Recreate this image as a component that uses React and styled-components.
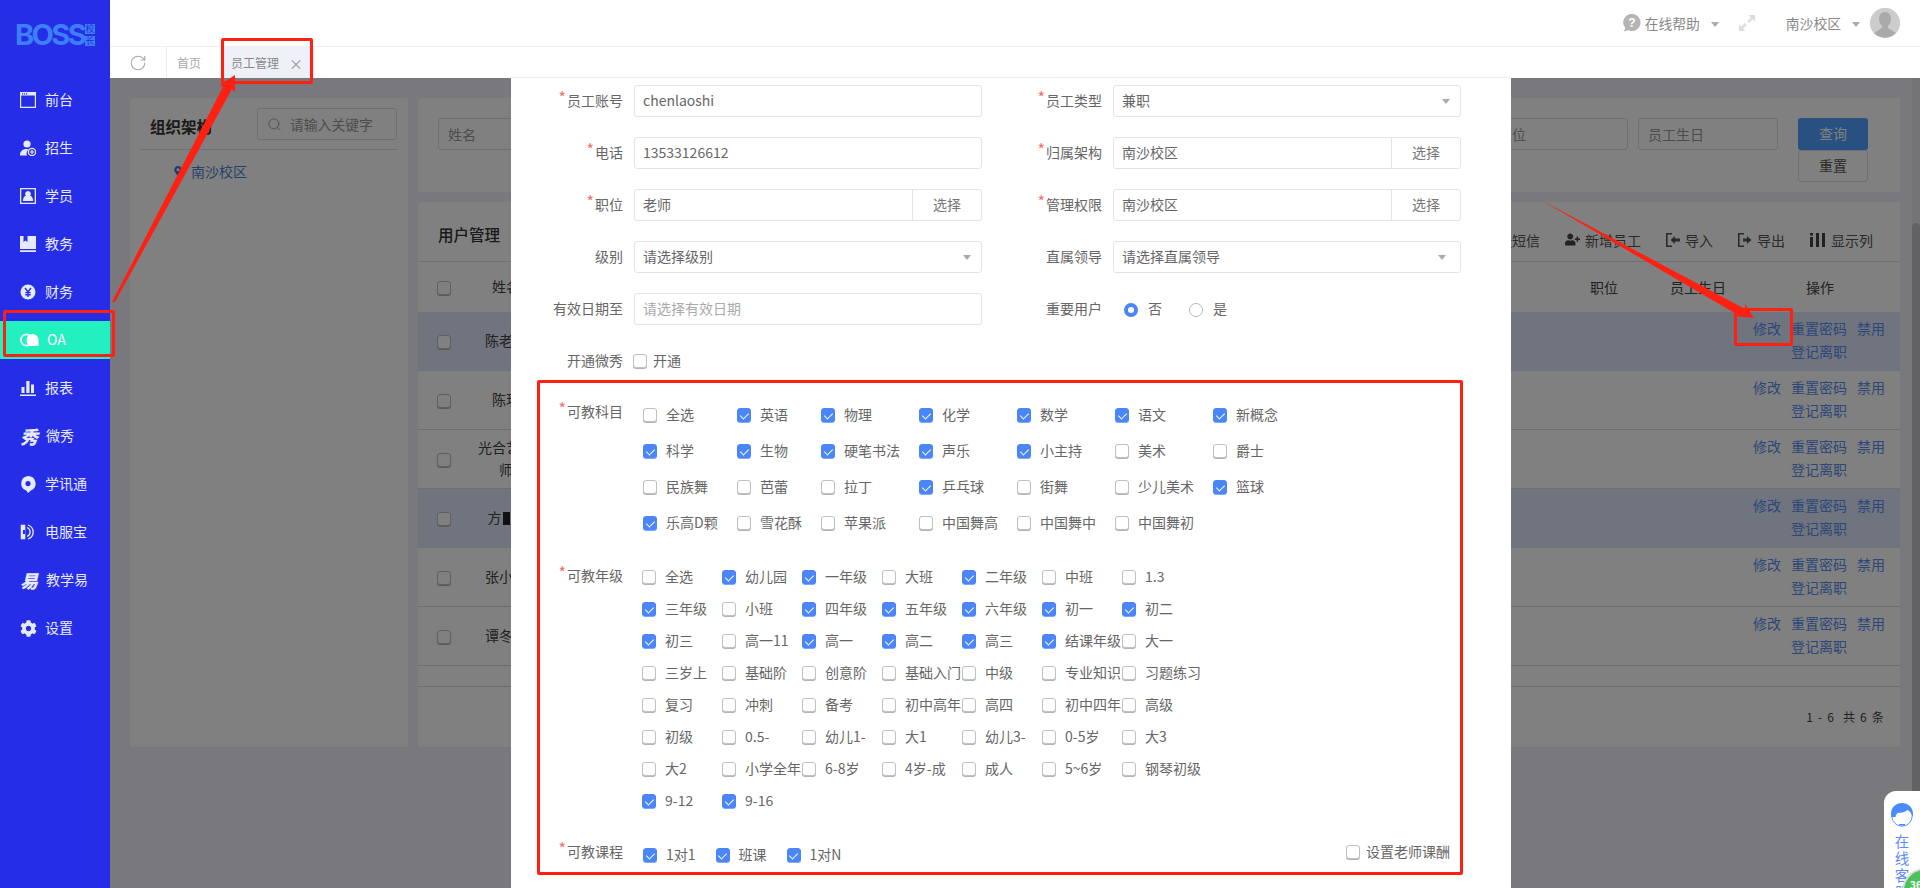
import React from 'react';
import styled, { createGlobalStyle } from 'styled-components';
import { RotateCw, Search } from 'lucide-react';
import { FaCog, FaUserPlus, FaMapMarkerAlt } from 'react-icons/fa';

const FONT = '"Noto Sans CJK SC", "Noto Sans", sans-serif';

const Global = createGlobalStyle`
  html, body { margin: 0; padding: 0; height: 100%; overflow: hidden; }
  body { font-family: ${FONT}; font-size: 14px; color: #666; background: #fff; }
  #root { height: 100%; }
  * { box-sizing: border-box; }
`;

const Page = styled.div`
  position: relative;
  display: flex;
  width: 1920px;
  height: 888px;
  overflow: hidden;
`;

/* ---------- sidebar ---------- */
const Sidebar = styled.aside`
  width: 110px;
  flex: none;
  background: #262de6;
  display: flex;
  flex-direction: column;
`;
const Logo = styled.div`
  height: 81px;
  padding: 24px 0 0 15px;
  display: flex;
  gap: 3px;
  align-items: flex-start;
`;
const LogoWord = styled.span`
  font-family: "Inter", sans-serif;
  font-weight: 700;
  font-size: 29px;
  line-height: 22px;
  letter-spacing: -2.6px;
  color: #3c7ffb;
  width: 67px;
`;
const LogoSeal = styled.span`
  display: flex;
  flex-direction: column;
  gap: 2px;
`;
const SealChar = styled.span`
  width: 10px;
  height: 10px;
  background: #3c7ffb;
  color: #262de6;
  font-size: 9px;
  line-height: 10px;
  text-align: center;
`;
const NavItem = styled.div`
  height: 38px;
  margin-bottom: 10px;
  padding: 0 0 2px 20px;
  display: flex;
  align-items: center;
  gap: 8px;
  background: ${p => (p.$active ? '#23f0c1' : 'transparent')};
  color: ${p => (p.$active ? '#fff' : '#e6eaff')};
  font-size: 14px;
  white-space: nowrap;
`;
const NavIcon = styled.span`
  min-width: 17px;
  height: 17px;
  flex: none;
  margin-top: 2px;
  display: inline-flex;
  align-items: center;
  justify-content: flex-start;
  color: #e6eaff;
`;
const GlyphIcon = styled.span`
  font-size: 18px;
  font-weight: 900;
  font-style: italic;
  line-height: 17px;
  color: #e6eaff;
`;

/* ---------- main column ---------- */
const Main = styled.div`
  flex: 1;
  min-width: 0;
  display: flex;
  flex-direction: column;
`;
const TopBar = styled.header`
  height: 47px;
  flex: none;
  border-bottom: 1px solid #eee;
  background: #fff;
  display: flex;
  align-items: center;
  justify-content: flex-end;
  padding-right: 20px;
  color: #888;
  font-size: 13.8px;
`;
const HelpText = styled.span`
  margin-left: 4px;
`;
const TopCaret = styled.span`
  width: 0;
  height: 0;
  border-left: 4.5px solid transparent;
  border-right: 4.5px solid transparent;
  border-top: 5px solid #aaa;
  margin: 2px 0 0 11px;
`;
const ExpandWrap = styled.span`
  margin: 0 30px 0 19px;
  display: inline-flex;
`;
const Avatar = styled.span`
  width: 30px;
  height: 30px;
  border-radius: 50%;
  overflow: hidden;
  margin-left: 10px;
  background: #ccc;
  display: block;
`;
const TabBar = styled.nav`
  height: 31px;
  flex: none;
  background: #fff;
  display: flex;
  align-items: stretch;
  font-size: 12px;
  color: #aaa;
`;
const RefreshCell = styled.span`
  width: 57px;
  flex: none;
  display: flex;
  align-items: center;
  justify-content: center;
  border-right: 1px solid #eee;
  color: #aaa;
`;
const Tab = styled.span`
  display: flex;
  align-items: center;
  padding: 0 ${p => (p.$active ? '11px' : '22px')} 0 ${p => (p.$active ? '8px' : '10px')};
  gap: 10px;
  color: ${p => (p.$active ? '#888' : '#aaa')};
  background: ${p => (p.$active ? '#eef0f8' : 'transparent')};
`;
const TabClose = styled.span`
  font-size: 14px;
  color: #999;
  line-height: 1;
`;

/* ---------- dimmed page content ---------- */
const Content = styled.section`
  position: relative;
  flex: 1;
  min-height: 0;
  display: flex;
  background: #f2f0fa;
  color: #333;
`;
const Workspace = styled.div`
  flex: 1;
  min-width: 0;
  padding: 20px 12px 0 20px;
  display: grid;
  grid-template-columns: 278px 1fr;
  grid-template-rows: 649px;
  gap: 10px;
`;
const Card = styled.div`
  background: #fff;
  border-radius: 3px;
`;
const TreeCard = styled(Card)`
  padding: 10px 10px 0;
`;
const TreeHead = styled.div`
  display: flex;
  align-items: flex-start;
  justify-content: space-between;
  height: 42px;
  border-bottom: 1px solid #ddd;
  padding-left: 10px;
`;
const TreeTitle = styled.h3`
  margin: 7px 0 0;
  font-size: 15.5px;
  line-height: 22px;
  font-weight: 700;
  color: #333;
`;
const SearchBox = styled.div`
  width: 140px;
  height: 32px;
  border: 1px solid #ddd;
  border-radius: 3px;
  display: flex;
  align-items: center;
  gap: 8px;
  padding-left: 9px;
  margin-right: 1px;
  color: #999;
  font-size: 13.8px;
`;
const TreeNode = styled.div`
  margin: 10px 0 0 33px;
  display: flex;
  align-items: center;
  gap: 8px;
  color: #4f80d8;
  font-size: 14px;
  line-height: 22px;
`;
const RightColumn = styled.div`
  display: flex;
  flex-direction: column;
  gap: 10px;
  min-width: 0;
`;
const FilterCard = styled(Card)`
  height: 94px;
  padding: 20px 32px 0 20px;
  display: flex;
  justify-content: space-between;
  align-items: flex-start;
`;
const FilterGroup = styled.div`
  display: flex;
  gap: 10px;
`;
const FilterInput = styled.div`
  width: 140px;
  height: 32px;
  border: 1px solid #ddd;
  border-radius: 3px;
  padding-left: 9px;
  line-height: 30px;
  color: #999;
`;
const ButtonStack = styled.div`
  margin-left: 10px;
  display: flex;
  flex-direction: column;
  width: 70px;
`;
const PrimaryBtn = styled.div`
  height: 32px;
  line-height: 31px;
  text-align: center;
  background: #50a0ff;
  color: #fff;
  border-radius: 3px;
  font-size: 14px;
`;
const PlainBtn = styled.div`
  height: 32px;
  line-height: 29px;
  text-align: center;
  border: 1px solid #ddd;
  border-radius: 3px;
  color: #555;
`;
const TableCard = styled(Card)`
  height: 545px;
`;
const TableTools = styled.div`
  height: 60px;
  border-bottom: 1px solid #e0e0e0;
  display: flex;
  align-items: center;
  justify-content: space-between;
  padding: 0 27px 0 20px;
  font-size: 14px;
  color: #555;
`;
const TableTitle = styled.h3`
  margin: 5px 0 0;
  font-size: 15.5px;
  font-weight: 500;
  color: #333;
`;
const ToolGroup = styled.div`
  display: flex;
  gap: 25px;
  margin-top: 16px;
`;
const Tool = styled.span`
  display: flex;
  align-items: center;
  gap: 5px;
  color: #555;
`;
const HeadRow = styled.div`
  height: 50px;
  display: flex;
  align-items: center;
  padding: 0 66px 0 19px;
  color: #444;
`;
const NameCell = styled.div`
  width: 110px;
  flex: none;
  margin-top: -2px;
  text-align: center;
  line-height: 22px;
  color: #444;
`;
const Spacer = styled.span`
  flex: 1;
`;
const HeadLabel = styled.span`
  margin-left: ${p => p.$gap}px;
`;
const Row = styled.div`
  height: 59px;
  display: flex;
  align-items: center;
  padding: 0 15px 0 19px;
  background: ${p => (p.$hi ? '#dee8fc' : 'transparent')};
  border-bottom: 1px solid ${p => (p.$hi ? 'transparent' : '#dcdcdc')};
`;
const Ops = styled.div`
  display: grid;
  grid-template-columns: 28px 56px 28px;
  column-gap: 10px;
  margin-top: -3px;
  line-height: 23px;
  color: #5a8ef0;
`;
const OpsSecond = styled.span`
  grid-column: 2;
`;
const EmptyRow = styled.div`
  height: 21px;
  border-bottom: 1px solid #dcdcdc;
`;
const Pager = styled.div`
  display: flex;
  justify-content: flex-end;
  padding: 21px 15px 0 0;
  font-size: 12px;
  letter-spacing: 1.2px;
  color: #444;
`;
const Emoji = styled.span`
  display: inline-block;
  width: 7px;
  height: 13px;
  background: #222;
  vertical-align: -2px;
  margin: 0 1px;
`;
const ScrollTrack = styled.div`
  width: 8px;
  flex: none;
  padding-top: 145px;
  background: #e8e8ee;
`;
const ScrollThumb = styled.div`
  height: 100%;
  background: #c4c4ca;
  border-radius: 4px 4px 0 0;
`;
const Mask = styled.div`
  position: absolute;
  inset: 0;
  background: rgba(0, 0, 0, 0.497);
`;

/* ---------- modal ---------- */
const Modal = styled.div`
  position: absolute;
  left: 401px;
  top: -1px;
  bottom: 0;
  width: 1000px;
  background: #fff;
  border-top: 1px solid #eee;
  padding-top: 7px;
  color: #666;
  font-size: 14px;
  overflow: hidden;
`;
const FormGrid = styled.div`
  display: grid;
  grid-template-columns: 471px 471px;
  column-gap: 8px;
  row-gap: 20px;
`;
const Field = styled.div`
  display: grid;
  grid-template-columns: 112px 348px;
  column-gap: 11px;
  height: 32px;
  align-items: center;
`;
const FieldLabel = styled.label`
  text-align: right;
  line-height: 20px;
  padding-bottom: 2px;
  color: #666;
  white-space: nowrap;
`;
const Star = styled.span`
  color: #f56c6c;
  font-size: 16px;
  line-height: 14px;
  margin-right: 1px;
  position: relative;
  top: -2px;
`;
const Input = styled.div`
  position: relative;
  height: 32px;
  border: 1px solid #e4e4e4;
  border-radius: 3px;
  padding-left: 8px;
  line-height: 28px;
  color: ${p => (p.$placeholder ? '#aaa' : '#666')};
  display: flex;
  justify-content: space-between;
`;
const PickButton = styled.span`
  width: 69px;
  flex: none;
  border-left: 1px solid #e4e4e4;
  text-align: center;
  color: #777;
`;
const Caret = styled.span`
  position: absolute;
  top: 13px;
  right: ${p => p.$offset}px;
  width: 0;
  height: 0;
  border-left: 4.5px solid transparent;
  border-right: 4.5px solid transparent;
  border-top: 5px solid #aaa;
`;
const InlineCheck = styled.div`
  display: flex;
  align-items: center;
  gap: 6px;
  margin-left: -1px;
  padding-bottom: 2px;
`;
const RadioGroup = styled.div`
  display: flex;
  align-items: center;
  padding: 0 0 2px 11px;
`;
const Radio = styled.span`
  width: 14px;
  height: 14px;
  border-radius: 50%;
  border: ${p => (p.$on ? '4.5px solid #4a86f7' : '1px solid #b8b8b8')};
  background: #fff;
  margin-top: 4px;
`;
const RadioText = styled.span`
  margin: 0 27px 0 10px;
`;
const Section = styled.div`
  display: grid;
  grid-template-columns: 112px 1fr;
  column-gap: ${p => p.$gap}px;
  margin-top: ${p => p.$top}px;
`;
const SectionLabel = styled(FieldLabel)`
  margin-top: ${p => p.$top}px;
`;
const CheckGrid = styled.div`
  display: grid;
  grid-template-columns: ${p => p.$cols};
  grid-auto-rows: ${p => p.$row}px;
  align-items: center;
`;
const CheckItem = styled.div`
  display: flex;
  align-items: center;
  gap: 9px;
  white-space: nowrap;
  line-height: 20px;
  color: #666;
`;
const Box = styled.span`
  position: relative;
  width: 14px;
  height: 14px;
  flex: none;
  border-radius: 3px;
  border: 1px solid ${p => (p.$on ? '#4a86f7' : '#c0c0c0')};
  background: ${p => (p.$on ? '#4a86f7' : '#fff')};
  box-shadow: 0 1px 0 ${p => (p.$on ? '#7ea8f7' : '#b4b4b4')};
  margin-top: 2px;
  &::after {
    content: '';
    display: ${p => (p.$on ? 'block' : 'none')};
    position: absolute;
    left: 3.5px;
    top: 2px;
    width: 4px;
    height: 7px;
    border: solid #fff;
    border-width: 0 1.6px 1.6px 0;
    transform: rotate(45deg);
  }
`;
const CourseRow = styled.div`
  display: flex;
  align-items: center;
  height: 32px;
  margin-left: 1px;
`;
const CourseGroup = styled.div`
  display: flex;
  gap: 20px;
`;
const RewardCheck = styled(CheckItem)`
  margin-left: auto;
  margin-right: 61px;
  gap: 6px;
  margin-top: -6px;
`;

/* ---------- annotations + widget ---------- */
const RedFrame = styled.div`
  position: absolute;
  left: ${p => p.$x}px;
  top: ${p => p.$y}px;
  width: ${p => p.$w}px;
  height: ${p => p.$h}px;
  border: 3px solid #ff2012;
  border-radius: 2px;
  pointer-events: none;
`;
const ArrowLayer = styled.svg`
  position: absolute;
  left: 0;
  top: 0;
  pointer-events: none;
`;
const Service = styled.div`
  position: absolute;
  right: 0;
  bottom: 0;
  width: 36px;
  height: 97px;
  background: #fff;
  border-radius: 12px 0 0 0;
  padding-top: 12px;
  overflow: hidden;
  display: flex;
  flex-direction: column;
  align-items: center;
  & > svg { flex: none; }
`;
const ServiceText = styled.span`
  width: 15px;
  margin-top: 5px;
  font-size: 14.5px;
  line-height: 17px;
  color: #5c8cff;
  text-align: center;
`;
const Ball = styled.div`
  position: absolute;
  left: 18px;
  top: 77px;
  width: 46px;
  height: 46px;
  border-radius: 50%;
  border: 2px solid #ddd;
  background: #4dc25a;
  color: #fff;
  font-size: 10px;
  font-weight: 700;
  line-height: 30px;
  padding-left: 6px;
`;

/* ---------- icons ---------- */
const I = ({ children, w = 16, h = 16, vb = '0 0 16 16' }) => (
  <svg width={w} height={h} viewBox={vb} fill="currentColor">{children}</svg>
);
const IconDesk = () => (
  <I><path fillRule="evenodd" d="M0 0h16v16H0zM1.2 3.6v11.2h13.6V3.6zM2 1.2h1.2v1.2H2zm2 0h1.2v1.2H4zm2 0h1.2v1.2H6z" /></I>
);
const IconEnroll = () => (
  <I>
    <circle cx="7" cy="4" r="3.6" />
    <path d="M0 15.5c0-4 2.4-6.5 6.6-6.5 1 0 1.8.2 2.4.5A4.5 4.5 0 0 0 7 15.5z" />
    <circle cx="12" cy="12" r="3.6" fill="none" stroke="currentColor" strokeWidth="1.3" />
    <path d="M11.4 9.8h1.2v1.6h1.6v1.2h-1.6v1.6h-1.2v-1.6H9.8v-1.2h1.6z" />
  </I>
);
const IconStudent = () => (
  <I><path fillRule="evenodd" d="M0 0h16v16H0zM1.3 1.3v13.4h13.4V1.3zM8 3a2.9 2.9 0 0 1 2.2 4.8c1.6.6 2.6 1.9 2.8 3.9v1.3H3v-1.3c.2-2 1.2-3.3 2.8-3.9A2.9 2.9 0 0 1 8 3z" /></I>
);
const IconBook = () => (
  <I><path fillRule="evenodd" d="M0 0h16v13H0zM3.5 0v6l2-1.4L7.5 6V0zM0 14.3h16V16H0z" /></I>
);
const IconMoney = () => (
  <svg width="16" height="16" viewBox="0 0 16 16">
    <circle cx="8" cy="8" r="7.5" fill="currentColor" />
    <path d="M5 4l3 4 3-4M8 8v5M5.3 8.6h5.4M5.3 10.8h5.4" stroke="#262de6" strokeWidth="1.4" fill="none" />
  </svg>
);
const IconOA = () => (
  <svg width="19" height="14" viewBox="0 0 19 14">
    <circle cx="6.5" cy="7" r="5.6" fill="none" stroke="#fff" strokeWidth="1.6" />
    <path d="M6.5 7a6 6 0 0 1 12 0v6h-8A6 6 0 0 1 6.5 7z" fill="#fff" />
  </svg>
);
const IconBars = () => (
  <I><path d="M1.5 7h3v6h-3zM6.3 1h3.2v12H6.3zM11 4.5h3V13h-3zM0 14.5h16V16H0z" /></I>
);
const IconPin = () => (
  <svg width="16" height="17" viewBox="0 0 16 17">
    <path fillRule="evenodd" fill="currentColor" d="M8 0a7.5 7.5 0 0 1 3 14.4L8 17l-1.6-2.4A7.5 7.5 0 0 1 8 0zm0 5a2.6 2.6 0 1 0 0 5.200a2.600 2.600 0 0 0 0-5.200z" />
  </svg>
);
const IconPhone = () => (
  <svg width="16" height="16" viewBox="0 0 16 16" fill="none" stroke="currentColor">
    <path d="M1 1h4v14H1z" fill="currentColor" strokeWidth="0.6" />
    <path d="M3 6h2v4H3z" fill="#262de6" stroke="none" />
    <path d="M7 3.500a4.800 4.800 0 0 1 0 9M8 1a8 7.500 0 0 1 0 14" strokeWidth="1.300" />
  </svg>
);
const IconSearchExpand = () => (
  <svg width="18" height="18" viewBox="0 0 18 18" fill="#ddd">
    <path d="M10.500 1H17v6.500l-2.300-2.300L11 9 9.200 7.200l3.700-3.900zM7.500 17H1v-6.500l2.300 2.300L7 9l1.800 1.800-3.700 3.900z" />
  </svg>
);
const IconHelp = () => (
  <svg width="18" height="18" viewBox="0 0 18 18">
    <path d="M9 0a8.500 8.500 0 1 1-3.600 16.200L1 17.500l1.200-3.600A8.500 8.500 0 0 1 9 0z" fill="#b4b4b4" />
    <text x="9" y="13" textAnchor="middle" fontSize="12" fontWeight="700" fill="#fff" fontFamily="Liberation Sans">?</text>
  </svg>
);
const Silhouette = () => (
  <svg width="30" height="30" viewBox="0 0 30 30">
    <circle cx="15" cy="15" r="15" fill="#ccc" />
    <path d="M15 4c4 0 6 3 6 7 0 3-1.500 5.500-3 7v2l8 5a15 15 0 0 1-22 0l8-5v-2c-1.500-1.500-3-4-3-7 0-4 2-7 6-7z" fill="#aaa" />
  </svg>
);
const IconImport = ({ out }) => (
  <svg width="14" height="16" viewBox="0 0 14 16" fill="#555">
    <path d="M0 1h6v1.500H1.600v11H6V15H0z" />
    {out
      ? <path d="M5 6.500h4V4l4.500 4L9 12V9.500H5z" />
      : <path d="M14 6.500h-5V4L4.500 8 9 12V9.500h5z" />}
  </svg>
);
const IconColumns = () => (
  <svg width="16" height="14" viewBox="0 0 16 14" fill="#444">
    <path d="M0 4h3v10H0zM6 0h3v14H6zM12 0h3v14h-3zM0 0h3v2.500H0z" />
  </svg>
);
const IconHead = () => (
  <svg width="22" height="24" viewBox="0 0 22 24">
    <path d="M11 0c6 0 11 4 11 11 0 1-.1 2-.4 3-1-4-3-6-5-7-2 2-6 3-10 3-1 1-2 2-2 4H.4C.1 13 0 12 0 11 0 4 5 0 11 0z" fill="#4a8cff" />
    <circle cx="11" cy="13" r="10.200" fill="none" stroke="#4a8cff" strokeWidth="0.900" />
    <path d="M8 21.800h6" stroke="#4a8cff" strokeWidth="1.600" />
  </svg>
);

/* ---------- data ---------- */
const navItems = [
  ['前台', <IconDesk />], ['招生', <IconEnroll />], ['学员', <IconStudent />], ['教务', <IconBook />],
  ['财务', <IconMoney />], ['OA', <IconOA />], ['报表', <IconBars />], ['微秀', <GlyphIcon>秀</GlyphIcon>],
  ['学讯通', <IconPin />], ['电服宝', <IconPhone />], ['教学易', <GlyphIcon>易</GlyphIcon>], ['设置', <FaCog size={17} />],
];

const subjects = [
  ['全选', 0], ['英语', 1], ['物理', 1], ['化学', 1], ['数学', 1], ['语文', 1], ['新概念', 1],
  ['科学', 1], ['生物', 1], ['硬笔书法', 1], ['声乐', 1], ['小主持', 1], ['美术', 0], ['爵士', 0],
  ['民族舞', 0], ['芭蕾', 0], ['拉丁', 0], ['乒乓球', 1], ['街舞', 0], ['少儿美术', 0], ['篮球', 1],
  ['乐高D颗', 1], ['雪花酥', 0], ['苹果派', 0], ['中国舞高', 0], ['中国舞中', 0], ['中国舞初', 0],
];
const grades = [
  ['全选', 0], ['幼儿园', 1], ['一年级', 1], ['大班', 0], ['二年级', 1], ['中班', 0], ['1.3', 0],
  ['三年级', 1], ['小班', 0], ['四年级', 1], ['五年级', 1], ['六年级', 1], ['初一', 1], ['初二', 1],
  ['初三', 1], ['高一11', 0], ['高一', 1], ['高二', 1], ['高三', 1], ['结课年级', 1], ['大一', 0],
  ['三岁上', 0], ['基础阶', 0], ['创意阶', 0], ['基础入门', 0], ['中级', 0], ['专业知识', 0], ['习题练习', 0],
  ['复习', 0], ['冲刺', 0], ['备考', 0], ['初中高年', 0], ['高四', 0], ['初中四年', 0], ['高级', 0],
  ['初级', 0], ['0.5-', 0], ['幼儿1-', 0], ['大1', 0], ['幼儿3-', 0], ['0-5岁', 0], ['大3', 0],
  ['大2', 0], ['小学全年', 0], ['6-8岁', 0], ['4岁-成', 0], ['成人', 0], ['5~6岁', 0], ['钢琴初级', 0],
  ['9-12', 1], ['9-16', 1],
];
const rows = [
  { name: <>陈老师</>, hi: true },
  { name: <>陈玥</> },
  { name: <>光合艺术<br />师</> },
  { name: <>方<Emoji />小</>, hi: true },
  { name: <>张小华</> },
  { name: <>谭冬梅</> },
];

const Check = ({ label, on }) => (
  <CheckItem><Box $on={!!on} />{label}</CheckItem>
);

const Req = ({ children }) => <FieldLabel><Star>*</Star>{children}</FieldLabel>;

export default function App() {
  return (
    <Page>
      <Global />
      <Sidebar>
        <Logo>
          <LogoWord>BOSS</LogoWord>
          <LogoSeal><SealChar>校</SealChar><SealChar>长</SealChar></LogoSeal>
        </Logo>
        {navItems.map(([label, icon]) => (
          <NavItem key={label} $active={label === 'OA'}>
            <NavIcon>{icon}</NavIcon>{label}
          </NavItem>
        ))}
      </Sidebar>

      <Main>
        <TopBar>
          <IconHelp />
          <HelpText>在线帮助</HelpText>
          <TopCaret />
          <ExpandWrap><IconSearchExpand /></ExpandWrap>
          <span>南沙校区</span>
          <TopCaret />
          <Avatar><Silhouette /></Avatar>
        </TopBar>
        <TabBar>
          <RefreshCell><RotateCw size={18} strokeWidth={1.5} /></RefreshCell>
          <Tab>首页</Tab>
          <Tab $active>员工管理<TabClose>×</TabClose></Tab>
        </TabBar>

        <Content>
          <Workspace>
            <TreeCard>
              <TreeHead>
                <TreeTitle>组织架构</TreeTitle>
                <SearchBox><Search size={15} strokeWidth={1.4} />请输入关键字</SearchBox>
              </TreeHead>
              <TreeNode><FaMapMarkerAlt size={10} color="#3f74d8" />南沙校区</TreeNode>
            </TreeCard>
            <RightColumn>
              <FilterCard>
                <FilterInput>姓名</FilterInput>
                <FilterGroup>
                  <FilterInput>职位</FilterInput>
                  <FilterInput>员工生日</FilterInput>
                  <ButtonStack>
                    <PrimaryBtn>查询</PrimaryBtn>
                    <PlainBtn>重置</PlainBtn>
                  </ButtonStack>
                </FilterGroup>
              </FilterCard>
              <TableCard>
                <TableTools>
                  <TableTitle>用户管理</TableTitle>
                  <ToolGroup>
                    <Tool>发送短信</Tool>
                    <Tool><FaUserPlus size={15} color="#444" />新增员工</Tool>
                    <Tool><IconImport />导入</Tool>
                    <Tool><IconImport out />导出</Tool>
                    <Tool><IconColumns />显示列</Tool>
                  </ToolGroup>
                </TableTools>
                <HeadRow>
                  <Box />
                  <NameCell>姓名</NameCell>
                  <Spacer />
                  <HeadLabel $gap={0}>职位</HeadLabel>
                  <HeadLabel $gap={52}>员工生日</HeadLabel>
                  <HeadLabel $gap={80}>操作</HeadLabel>
                </HeadRow>
                {rows.map((r, i) => (
                  <Row key={i} $hi={r.hi}>
                    <Box />
                    <NameCell>{r.name}</NameCell>
                    <Spacer />
                    <Ops>
                      <span>修改</span><span>重置密码</span><span>禁用</span>
                      <OpsSecond>登记离职</OpsSecond>
                    </Ops>
                  </Row>
                ))}
                <EmptyRow />
                <Pager>1 - 6&nbsp;&nbsp;共 6 条</Pager>
              </TableCard>
            </RightColumn>
          </Workspace>
          <ScrollTrack><ScrollThumb /></ScrollTrack>
          <Mask />

          <Modal>
            <FormGrid>
              <Field><Req>员工账号</Req><Input>chenlaoshi</Input></Field>
              <Field><Req>员工类型</Req><Input>兼职<Caret $offset={10} /></Input></Field>
              <Field><Req>电话</Req><Input>13533126612</Input></Field>
              <Field><Req>归属架构</Req><Input>南沙校区<PickButton>选择</PickButton></Input></Field>
              <Field><Req>职位</Req><Input>老师<PickButton>选择</PickButton></Input></Field>
              <Field><Req>管理权限</Req><Input>南沙校区<PickButton>选择</PickButton></Input></Field>
              <Field><FieldLabel>级别</FieldLabel><Input>请选择级别<Caret $offset={10} /></Input></Field>
              <Field><FieldLabel>直属领导</FieldLabel><Input>请选择直属领导<Caret $offset={14} /></Input></Field>
              <Field><FieldLabel>有效日期至</FieldLabel><Input $placeholder>请选择有效日期</Input></Field>
              <Field>
                <FieldLabel>重要用户</FieldLabel>
                <RadioGroup>
                  <Radio $on /><RadioText>否</RadioText>
                  <Radio /><RadioText>是</RadioText>
                </RadioGroup>
              </Field>
              <Field>
                <FieldLabel>开通微秀</FieldLabel>
                <InlineCheck><Box />开通</InlineCheck>
              </Field>
            </FormGrid>

            <Section $gap={20} $top={19}>
              <SectionLabel $top={5}><Star>*</Star>可教科目</SectionLabel>
              <CheckGrid $cols="94px 84px 98px 98px 98px 98px 98px" $row={36}>
                {subjects.map(([l, on]) => <Check key={l} label={l} on={on} />)}
              </CheckGrid>
            </Section>

            <Section $gap={19} $top={20}>
              <SectionLabel $top={5}><Star>*</Star>可教年级</SectionLabel>
              <CheckGrid $cols="repeat(7, 80px)" $row={32}>
                {grades.map(([l, on], i) => <Check key={l + i} label={l} on={on} />)}
              </CheckGrid>
            </Section>

            <Section $gap={19} $top={22}>
              <SectionLabel $top={3}><Star>*</Star>可教课程</SectionLabel>
              <CourseRow>
                <CourseGroup>
                  <Check label="1对1" on />
                  <Check label="班课" on />
                  <Check label="1对N" on />
                </CourseGroup>
                <RewardCheck><Box />设置老师课酬</RewardCheck>
              </CourseRow>
            </Section>
          </Modal>
        </Content>
      </Main>

      <Service>
        <IconHead />
        <ServiceText>在线客服</ServiceText>
        <Ball>360</Ball>
      </Service>

      <ArrowLayer width="1920" height="888" viewBox="0 0 1920 888">
        <polygon fill="#ff2012" points="112,302 115,302 232,89 235,92 235,75 220,85 223,87" />
        <polygon fill="#ff2012" points="1541,200 1745,309 1745,304 1754,318 1735,316 1738,315" />
      </ArrowLayer>
      <RedFrame $x={221} $y={38} $w={92} $h={46} />
      <RedFrame $x={3} $y={310} $w={112} $h={47} />
      <RedFrame $x={1734} $y={308} $w={59} $h={38} />
      <RedFrame $x={537} $y={380} $w={926} $h={495} />
    </Page>
  );
}
